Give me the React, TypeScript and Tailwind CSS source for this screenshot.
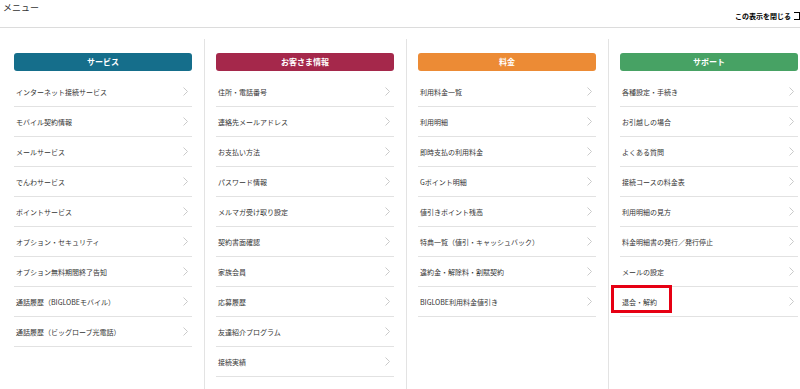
import React from "react";

type Col = { title: string; color: string; items: string[] };

const cols: Col[] = [
  {
    title: "サービス",
    color: "bg-[#156e8b]",
    items: [
      "インターネット接続サービス",
      "モバイル契約情報",
      "メールサービス",
      "でんわサービス",
      "ポイントサービス",
      "オプション・セキュリティ",
      "オプション無料期間終了告知",
      "通話履歴（BIGLOBEモバイル）",
      "通話履歴（ビッグローブ光電話）",
    ],
  },
  {
    title: "お客さま情報",
    color: "bg-[#a5284b]",
    items: [
      "住所・電話番号",
      "連絡先メールアドレス",
      "お支払い方法",
      "パスワード情報",
      "メルマガ受け取り設定",
      "契約書面確認",
      "家族会員",
      "応募履歴",
      "友達紹介プログラム",
      "接続実績",
    ],
  },
  {
    title: "料金",
    color: "bg-[#ec8b35]",
    items: [
      "利用料金一覧",
      "利用明細",
      "即時支払の利用料金",
      "Gポイント明細",
      "値引きポイント残高",
      "特典一覧（値引・キャッシュバック）",
      "違約金・解除料・割賦契約",
      "BIGLOBE利用料金値引き",
    ],
  },
  {
    title: "サポート",
    color: "bg-[#47a264]",
    items: [
      "各種設定・手続き",
      "お引越しの場合",
      "よくある質問",
      "接続コースの料金表",
      "利用明細の見方",
      "料金明細書の発行／発行停止",
      "メールの設定",
      "退会・解約",
    ],
  },
];

function Chevron() {
  return (
    <svg width="5" height="9" viewBox="0 0 5 9" className="shrink-0">
      <path d="M0.5 0.5 L4.5 4.5 L0.5 8.5" fill="none" stroke="#c4c4c4" strokeWidth="0.9" />
    </svg>
  );
}

export default function App() {
  return (
    <div
      className="w-[800px] h-[389px] overflow-hidden bg-white flex flex-col text-[#333]"
      style={{ fontFamily: '"Noto Sans CJK JP", "Noto Sans", sans-serif' }}
    >
      <div className="h-[28px] shrink-0 border-b border-[#dcdcdc] flex justify-between relative">
        <div className="pl-[3px] pt-[1px] text-[9px] leading-[14px] text-[#333]">メニュー</div>
        <div className="flex items-start pt-[10px] pr-0">
          <span className="text-[7px] leading-[12px] font-bold text-black">この表示を閉じる</span>
          <span className="ml-[3px] mt-[2px] w-[6px] h-[8px] border-t-[1.5px] border-r-[1.5px] border-b-[1.5px] border-black"></span>
        </div>
      </div>
      <div className="flex-1 flex pl-[2px] mt-[11px] min-h-0">
        {cols.map((c, ci) => (
          <div
            key={c.title}
            className={
              "w-[202px] shrink-0 pr-3 pt-[14px] " +
              (ci === 0 ? "pl-3" : "pl-[11px] border-l border-[#e3e3e3]")
            }
          >
            <div
              className={
                c.color +
                " h-[18px] rounded-[3px] flex items-center justify-center text-white font-bold text-[8px]"
              }
            >
              {c.title}
            </div>
            <div className="mt-[6px]">
              {c.items.map((it) => (
                <div
                  key={it}
                  className="relative h-[30px] border-b border-[#e2e2e2] flex items-center justify-between pl-[2px] pr-[4px]"
                >
                  <span className="text-[7px] leading-[10px] whitespace-nowrap text-[#333]">{it}</span>
                  <Chevron />
                  {it === "退会・解約" && (
                    <div className="absolute left-[-9px] top-[-2px] w-[61px] h-[28px] border-[3px] border-[#e60013]"></div>
                  )}
                </div>
              ))}
            </div>
          </div>
        ))}
      </div>
    </div>
  );
}
